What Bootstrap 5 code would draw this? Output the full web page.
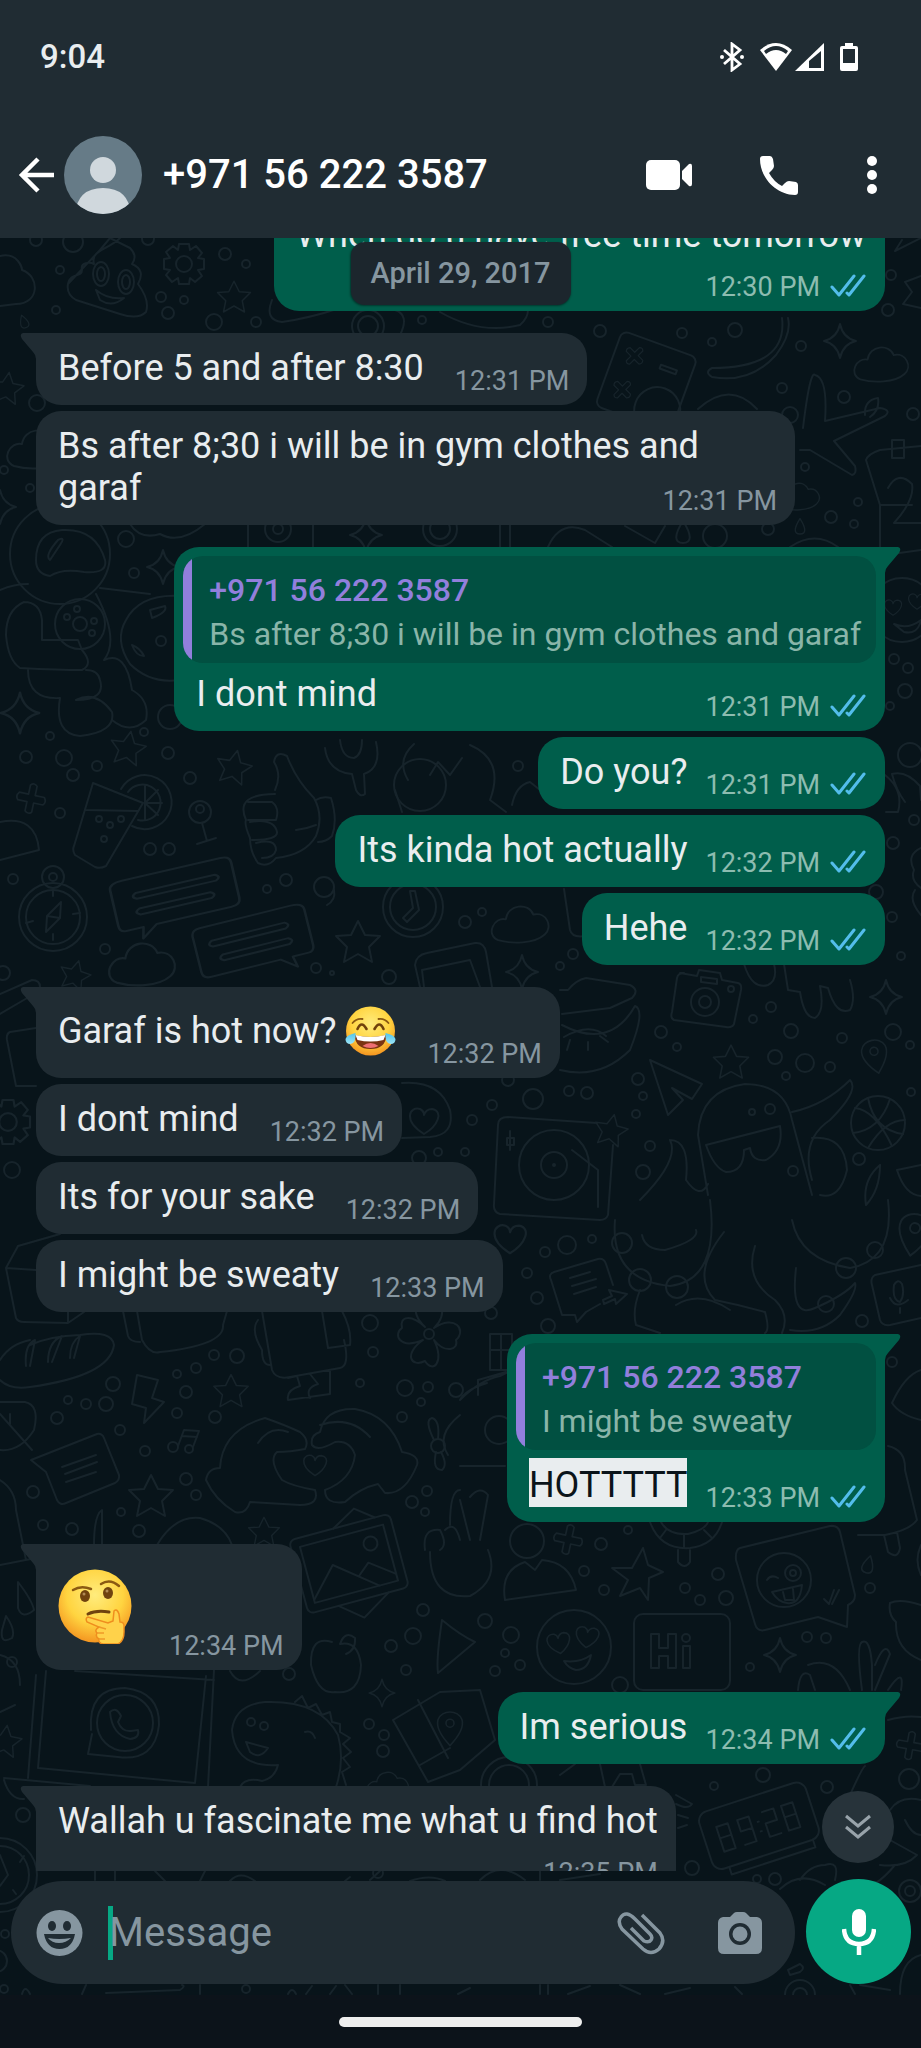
<!DOCTYPE html>
<html lang="en" data-bs-theme="dark">
<head>
<meta charset="utf-8">
<meta name="viewport" content="width=device-width, initial-scale=1">
<title>Chat</title>
<link href="https://cdn.jsdelivr.net/npm/bootstrap@5.3.0/dist/css/bootstrap.min.css" rel="stylesheet">
<style>
  body { font-family: Roboto, "Liberation Sans", sans-serif; background: #0c131a; color: #e9edef; }
  .top-area { background: #202c33; height: 238px; }
  .status-row { height: 113px; padding: 0 63px 0 40px; font-size: 33px; line-height: 38px; }
  .signal-icon { margin: 0 16px; }
  .app-row { height: 124px; padding: 0 43px 0 17px; }
  .app-actions { gap: 67px; }
  .contact-title { font-size: 40px; line-height: 48px; margin: 0 0 0 20px; }
  .icon-btn { background: none; border: 0; padding: 0; color: inherit; display: block; line-height: 0; }
  .chat-area { background: #08141a; min-height: 0; }
  .doodles { fill: none; stroke: #17242b; stroke-width: 2; stroke-linecap: round; stroke-linejoin: round; }
  .message-list { min-height: 0; padding: 0 36px; }
  .message-stack { margin-top: -38px; }
  .date-pill { top: 4px; left: 50%; transform: translateX(-50%); padding: 14px 20px; font-size: 29px; line-height: 35px; border-radius: 14px; background: #1c262d; color: #8696a0; box-shadow: 0 1px 2px rgba(0,0,0,.4); }
  .bubble { position: relative; flex: none; width: fit-content; max-width: calc(100% - 90px); padding: 14px 18px 8px 22px; border-radius: 25px; font-size: 36px; line-height: 42px; background: #202c33; margin-bottom: 6px; }
  .bubble::after { content: ""; display: block; clear: both; }
  .bubble.last { margin-bottom: 22px; }
  .bubble.sent { align-self: flex-end; background: #005e4b; padding-right: 19px; }
  .bubble.tailed::before { content: ""; position: absolute; top: 0; width: 17px; height: 26px; background: inherit; }
  .bubble.tailed:not(.sent) { border-top-left-radius: 0; }
  .bubble.tailed:not(.sent)::before { left: -16px; clip-path: path("M17 0H3Q-1 1 2 6L13 19Q16 22 16 26H17Z"); }
  .bubble.tailed.sent { border-top-right-radius: 0; }
  .bubble.tailed.sent::before { right: -16px; clip-path: path("M0 0H14Q18 1 15 6L4 19Q1 22 1 26H0Z"); }
  .stamp { float: right; display: flex; align-items: center; gap: 10px; margin: 19px 0 0 31px; font-size: 27px; line-height: 31px; color: #8696a0; }
  .stamp svg { margin-bottom: 3px; }
  .sent .stamp { margin-left: 18px; color: #8dbcb0; }
  .stamp.below { float: none; justify-content: flex-end; margin-top: 16px; }
  .has-emoji { line-height: 60px; }
  .has-emoji .stamp { margin-top: 38px; }
  .has-emoji svg { vertical-align: -13px; }
  .big-emoji .stamp { margin-top: 73px; margin-left: 37px; }
  .big-emoji svg { vertical-align: top; margin-top: 11px; }
  .bubble.with-quote { padding: 9px 9px 8px; }
  .quote { background: #015041; border-radius: 20px; overflow: hidden; padding: 12px 15px 7px 26px; font-size: 32px; line-height: 44px; color: #8ab5a9; position: relative; }
  .quote::before { content: ""; position: absolute; left: 0; top: 0; bottom: 0; width: 9px; background: #917fdc; }
  .quote-name { color: #917fdc; }
  .reply { padding: 10px 10px 0 13px; }
  .reply::after { content: ""; display: block; clear: both; }
  .reply.picked { padding-top: 8px; }
  .picked .stamp { margin-top: 25px; }
  .found { display: inline-block; background: #e9edef; color: #0b141a; padding-top: 6px; line-height: 43px; font-weight: 400; }
  .to-bottom { right: 27px; bottom: 132px; width: 72px; height: 72px; border-radius: 50%; background: #27333a; color: #98a3aa; display: flex; align-items: center; justify-content: center; border: 0; padding: 0; }
  .composer { padding: 8px 10px 11px 11px; gap: 11px; }
  .entry { background: #202c33; border-radius: 52px; height: 103px; min-width: 0; padding: 0 32px 0 25px; margin-top: 2px; color: #8696a0; }
  .entry-actions { gap: 52px; }
  .entry input { background: none; border: 0; outline: 0; padding: 0; color: #e9edef; font-size: 40px; line-height: 48px; width: 0; min-width: 0; }
  .entry input::placeholder { color: #8696a0; opacity: 1; }
  .caret { width: 5px; height: 54px; background: #06a884; margin-left: 25px; margin-right: -4px; }
  .mic-btn { width: 105px; height: 105px; border-radius: 50%; background: #06a884; color: #fff; border: 0; padding: 0; flex: none; display: flex; align-items: center; justify-content: center; }
  .gesture { height: 53px; background: #0c131a; }
  .gesture-bar { width: 243px; height: 10px; border-radius: 5px; background: #eee; }
</style>
</head>
<body class="vh-100 d-flex flex-column overflow-hidden">

<svg width="0" height="0" class="position-absolute" aria-hidden="true">
  <defs>
    <symbol id="ticks" viewBox="0 0 36 24"><path d="M2 13l7 8L24 2M17 19l2 2L34 2" fill="none" stroke="#53bdeb" stroke-width="3" stroke-linecap="round" stroke-linejoin="round"/></symbol>
    <radialGradient id="face" cx=".5" cy=".35" r=".7"><stop offset="0" stop-color="#ffec7d"/><stop offset=".55" stop-color="#ffd440"/><stop offset="1" stop-color="#f28a1b"/></radialGradient>
    <linearGradient id="drop" x1="0" y1="0" x2="0" y2="1"><stop offset="0" stop-color="#4fc4ea"/><stop offset="1" stop-color="#9ce5f7"/></linearGradient>
    <g id="star"><path d="M0-21L7-7L22-6L11 5L14 20L0 12L-14 20L-11 5L-22-6L-7-7Z"/></g>
    <g id="spark"><path d="M0-17Q3-3 16 0Q3 3 0 17Q-3 3-16 0Q-3-3 0-17Z"/></g>
    <g id="cloud"><path d="M-24 16C-38 10-28-9-16-6C-14-22 8-24 13-11C27-14 34 2 25 10C14 20-10 20-24 16Z"/></g>
    <g id="heart"><path d="M0 12C-22-2-14-16-4-13Q0-11 0-7Q2-13 8-13C20-11 14 4 0 12Z"/></g>
    <g id="plus"><path d="M-4-16Q0-20 4-16V-5H15Q19 0 15 4H4V15Q0 19-4 15V4H-15Q-19 0-15-5H-4Z"/></g>
    <g id="droplet"><path d="M0-12C9 2 9 10 0 10S-9 2 0-12Z"/></g>
    <g id="talk"><path d="M-40-25H35Q42-25 42-18V18Q42 25 35 25H-22L-34 36L-32 25H-45Q-50 25-50 18V-18Q-50-25-40-25ZM-32-10H28Q33-7 28-4H-32Q-37-7-32-10ZM-32 6H22Q27 9 22 12H-32Q-37 9-32 6Z"/></g>
    <g id="flower"><circle r="5"/><path d="M-4-7C-22-24-10-38 0-28C12-38 20-20 5-6C26-20 38-4 27 6C30 16 16 20 5 6C16 28 4 40-4 27C-18 34-26 20-6 6C-30 16-36 0-27-6C-30-18-18-20-4-7Z"/></g>
    <g id="gear"><circle r="8"/><path d="M-6-14L-5-20H5L6-14L12-18L18-11L14-6L20-5V5L14 6L18 12L11 18L6 14L5 20H-5L-6 14L-12 18L-18 11L-14 6L-20 5V-5L-14-6L-18-12L-11-18Z"/></g>
    <g id="pin"><path d="M0 22C-28-8-12-20 0-20S28-8 0 22Z"/><circle cy="-6" r="5"/></g>
  </defs>
</svg>

<header class="top-area flex-shrink-0">
  <div class="status-row d-flex align-items-center justify-content-between">
    <span class="fw-medium">9:04</span>
    <div class="d-flex align-items-center" aria-hidden="true">
      <svg width="24" height="30" viewBox="0 0 24 30"><path d="M4 8l16 14-8 6V2l8 6L4 22" fill="none" stroke="#fff" stroke-width="2.8"/><circle cx="2" cy="15" r="2" fill="#fff"/><circle cx="22" cy="15" r="2" fill="#fff"/></svg>
      <svg class="signal-icon" width="64" height="30" viewBox="0 0 64 30"><path d="M0 8Q16-6 32 8L16 29Z" fill="#fff"/><path d="M4 9Q16-1 28 9L26 12Q16 4 6 12Z" fill="#202c33"/><path d="M64 1V29H35Z" fill="#fff"/><path d="M61 9V26H49V19Z" fill="#202c33"/></svg>
      <svg width="18" height="30" viewBox="0 0 18 30"><path d="M5 1h8v3h3q2 0 2 2v21q0 2-2 2H2q-2 0-2-2V6q0-2 2-2h3z" fill="#fff"/><path d="M3 7h12v14H3z" fill="#202c33"/></svg>
    </div>
  </div>
  <div class="app-row d-flex align-items-center">
    <button class="icon-btn" aria-label="Back"><svg width="38" height="36" viewBox="0 0 38 36"><path d="M37 18H5M21 2L5 18l16 16" fill="none" stroke="#fff" stroke-width="4.5"/></svg></button>
    <svg class="ms-2" width="80" height="80" viewBox="0 0 80 80" role="img" aria-label="Contact photo"><clipPath id="round"><circle cx="40" cy="40" r="39"/></clipPath><g clip-path="url(#round)"><path fill="#667b87" d="M0 0h80v80H0z"/><circle cx="40" cy="35" r="13" fill="#d0d8dd"/><path d="M12 80Q14 53 40 53T68 80Z" fill="#d0d8dd"/></g></svg>
    <h1 class="contact-title fw-medium flex-grow-1">+971 56 222 3587</h1>
    <div class="app-actions d-flex align-items-center">
      <button class="icon-btn" aria-label="Video call"><svg width="46" height="30" viewBox="0 0 46 30"><rect width="34" height="30" rx="5" fill="#fff"/><path d="M36 11l7-7q3-1 3 2v18q0 3-3 2l-7-7z" fill="#fff"/></svg></button>
      <button class="icon-btn" aria-label="Voice call"><svg width="40" height="40" viewBox="0 0 40 40"><path d="M4 1h7q2 0 3 3l1 7q0 2-2 4l-3 3q5 9 13 13l3-3q2-2 4-2l7 1q2 1 2 3v7q0 3-3 3C16 39 1 22 1 4Q1 1 4 1Z" fill="#fff"/></svg></button>
      <button class="icon-btn" aria-label="More options"><svg width="12" height="38" viewBox="0 0 12 38"><g fill="#fff"><circle cx="6" cy="5" r="5"/><circle cx="6" cy="19" r="5"/><circle cx="6" cy="33" r="5"/></g></svg></button>
    </div>
  </div>
</header>

<main class="chat-area flex-grow-1 d-flex flex-column position-relative">
  <svg class="doodles position-absolute top-0 start-0 w-100 h-100" viewBox="0 238 921 1757" preserveAspectRatio="xMidYMin slice" aria-hidden="true">
    <!-- first band -->
    <path d="M0 256C18 252 22 268 22 270C40 276 40 304 16 304L0 306M68 284C70 272 82 278 82 270C80 262 90 262 94 264C90 250 108 250 120 238M100 250L110 238L130 248Q138 256 132 264Q146 270 138 284Q150 300 146 312Q138 320 120 314L76 300Q66 294 68 284ZM96 290Q108 300 124 298Q112 308 100 300Z"/>
    <ellipse cx="101" cy="274" rx="8" ry="12"/><ellipse cx="101" cy="274" rx="4" ry="7"/><ellipse cx="126" cy="282" rx="8" ry="12"/><ellipse cx="126" cy="282" rx="4" ry="7"/>
    <use href="#gear" x="184" y="264"/><use href="#star" transform="translate(234 297) scale(.75)"/><circle cx="36" cy="240" r="6"/><circle cx="73" cy="242" r="10"/><circle cx="60" cy="270" r="4"/><circle cx="56" cy="310" r="4"/><circle cx="148" cy="239" r="6"/><circle cx="225" cy="254" r="6"/><circle cx="246" cy="264" r="4"/><circle cx="161" cy="297" r="5"/><circle cx="168" cy="313" r="6"/><circle cx="184" cy="300" r="4"/><circle cx="214" cy="322" r="8"/><circle cx="256" cy="322" r="5"/><use href="#droplet" transform="translate(24 322) rotate(-20) scale(.6)"/><circle cx="368" cy="326" r="16"/><circle cx="368" cy="326" r="10"/><path d="M272 300Q264 320 282 322Q310 318 340 308M440 312Q480 335 520 325Q528 318 528 310M395 310Q410 315 400 335"/>
    <circle cx="422" cy="320" r="4"/><circle cx="548" cy="322" r="5"/><circle cx="600" cy="331" r="6"/><circle cx="735" cy="330" r="7"/><circle cx="682" cy="333" r="5"/><circle cx="712" cy="342" r="4"/><circle cx="891" cy="275" r="5"/><circle cx="888" cy="310" r="6"/><path d="M921 238L895 251L902 240M921 276L905 282L912 292L903 304L921 308"/><path d="M782 318Q788 368 712 368Q704 372 712 377Q750 384 776 355Q792 334 788 318"/>
    <use href="#spark" x="840" y="341"/><use href="#cloud" transform="translate(882 365) scale(.9)"/><circle cx="801" cy="346" r="5"/><circle cx="782" cy="388" r="5"/><circle cx="844" cy="397" r="6"/><circle cx="913" cy="414" r="6"/>
    <g transform="translate(648 377) rotate(20)"><rect x="-40" y="-35" width="80" height="80" rx="7"/><use href="#plus" transform="translate(-20 -15) rotate(25) scale(.6)"/><use href="#plus" transform="translate(-20 21) rotate(25) scale(.6)"/><path d="M8-16H25V-12H8Z"/><circle cx="20" cy="28" r="23"/></g>
    <path d="M803 428Q810 370 815 375Q828 378 825 421L880 408Q892 410 885 416L834 441L855 466Q857 474 852 475L810 450L800 450M865 415Q864 400 878 398Q880 410 870 417M698 409Q730 380 757 409M866 460Q868 454 880 450L921 446M866 460L880 505V550M880 505H912M892 440H904V458H892ZM888 488Q898 470 912 484Q915 500 894 523H921"/><circle cx="790" cy="415" r="8"/><circle cx="805" cy="467" r="4"/><circle cx="858" cy="502" r="4"/><circle cx="831" cy="517" r="6"/><circle cx="854" cy="524" r="4"/><use href="#cloud" transform="translate(799 497) scale(.7)"/>
    <use href="#star" transform="translate(7 388) rotate(8) scale(.75)"/><circle cx="37" cy="403" r="8"/><use href="#cloud" transform="translate(38 450) scale(1)"/><circle cx="4" cy="470" r="4"/><circle cx="30" cy="488" r="4"/><use href="#spark" x="0" y="507"/>
    <!-- astronaut and planet -->
    <circle cx="60" cy="554" r="50"/><path d="M36 560Q36 532 62 530Q96 528 105 560Q108 574 84 572Q62 568 50 576Q36 574 36 560ZM50 560Q44 556 58 540Q66 536 60 545ZM24 602Q6 610 6 635Q8 660 20 668Q60 670 82 670Q94 664 82 650L78 640H42V620Q40 602 24 602M28 670Q28 700 60 698Q54 734 80 736Q116 732 112 712Q96 690 76 700Q106 700 100 680Q98 670 86 670M0 590Q14 584 28 584M96 594Q120 640 104 660Q126 650 132 690Q150 700 146 720Q130 735 112 720M100 588L150 594"/><circle cx="80" cy="624" r="25"/><circle cx="80" cy="624" r="7"/><circle cx="67" cy="617" r="3"/><circle cx="77" cy="609" r="3"/><circle cx="94" cy="621" r="3"/><circle cx="92" cy="633" r="3"/>
    <path d="M179 596Q140 594 126 620Q114 640 130 664Q150 684 179 680M150 610L165 606Q168 612 152 618ZM132 645Q140 648 144 656Q136 656 132 645Z"/><circle cx="161" cy="641" r="5"/><use href="#spark" x="163" y="567"/><circle cx="126" cy="539" r="8"/><circle cx="134" cy="573" r="5"/><use href="#spark" transform="translate(20 713) scale(1.2)"/><circle cx="170" cy="717" r="12"/><circle cx="144" cy="732" r="4"/><circle cx="50" cy="736" r="4"/><path d="M130 524Q140 540 160 534Q180 545 205 524M248 524V547M313 524V547"/><circle cx="278" cy="529" r="13"/><circle cx="278" cy="529" r="5"/><use href="#spark" transform="translate(366 535)"/><circle cx="440" cy="529" r="17"/><circle cx="440" cy="529" r="10"/><path d="M500 524V547M510 524V547M548 547Q560 520 585 530L612 547M625 526L655 543L665 526"/><use href="#droplet" x="683" y="533"/><circle cx="715" cy="536" r="12"/><circle cx="768" cy="529" r="6"/><use href="#droplet" transform="translate(800 527) scale(.7)"/><path d="M790 547Q815 530 838 547M885 555L921 550"/>
    <circle cx="902" cy="610" r="32"/><use href="#heart" transform="translate(893 608) scale(.6)"/><use href="#heart" transform="translate(917 602) scale(.6)"/><path d="M894 624Q908 630 921 620Q918 635 904 632Z"/><circle cx="894" cy="659" r="5"/><circle cx="908" cy="668" r="5"/><circle cx="905" cy="691" r="7"/><circle cx="890" cy="706" r="4"/>
    <!-- cocktail, thumb and compass band -->
    <use href="#plus" transform="translate(31 799) rotate(12) scale(.85)"/><use href="#star" transform="translate(128 748) rotate(10) scale(.8)"/><use href="#star" transform="translate(234 767) rotate(12) scale(.8)"/><circle cx="26" cy="757" r="6"/><circle cx="64" cy="758" r="8"/><circle cx="97" cy="766" r="5"/><circle cx="73" cy="775" r="6"/><circle cx="168" cy="753" r="6"/><circle cx="190" cy="778" r="6"/><circle cx="60" cy="813" r="5"/>
    <path d="M93 783L143 803L106 866Q100 869 95 867L75 855Q72 850 74 846ZM86 810L138 811M0 822Q36 815 39 850L0 860"/><circle cx="99" cy="819" r="3"/><circle cx="110" cy="825" r="3"/><circle cx="104" cy="839" r="3"/><circle cx="121" cy="819" r="3"/><path d="M121 789A27 27 0 1 1 132 826M128 792A18 18 0 1 1 138 820M145 803L145 786M145 803L158 790M145 803L162 803M145 803L158 815M145 803L145 820"/><circle cx="200" cy="812" r="11"/><circle cx="200" cy="809" r="4"/><path d="M202 823L207 841M197 844L216 838"/><circle cx="150" cy="849" r="6"/><circle cx="169" cy="849" r="6"/>
    <path d="M275 790Q282 775 274 762Q276 750 287 756Q296 780 314 798Q324 816 316 836Q305 855 276 858Q268 868 258 863Q250 852 250 838Q244 824 246 820Q240 806 248 800Q256 794 275 794M248 802H272Q280 808 276 820H248M250 822Q274 818 277 832Q278 840 252 840M256 843Q276 838 276 850Q274 858 262 858M316 800Q322 796 331 798Q338 820 332 836Q326 842 318 842M296 830Q306 829 316 825M325 748Q328 772 352 774L356 790Q360 798 365 794L364 774Q382 768 376 742M340 740Q342 758 354 758Q362 755 362 740"/>
    <circle cx="420" cy="785" r="26"/><path d="M408 780Q396 760 414 744M430 775L438 762L450 775L462 758M395 790L402 812M470 745Q505 760 490 800L506 812M512 805Q516 785 530 782L540 790"/><circle cx="518" cy="766" r="5"/><circle cx="267" cy="889" r="4"/><circle cx="286" cy="880" r="6"/><circle cx="13" cy="879" r="5"/>
    <circle cx="53" cy="877" r="11"/><circle cx="53" cy="877" r="4"/><circle cx="53" cy="917" r="34"/><circle cx="53" cy="917" r="27"/><path d="M61 902L47 916L46 932L60 918ZM47 916L60 918M53 890V896M53 940V934M26 923L33 921M80 913L73 914"/><use href="#talk" transform="translate(180 893) rotate(-13) scale(1.35 1)"/><use href="#talk" transform="translate(248 942) rotate(-14) scale(-1.25 1)"/><use href="#cloud" transform="translate(143 965) scale(1.1)"/><circle cx="105" cy="949" r="5"/><use href="#star" transform="translate(358 942)"/><circle cx="413" cy="907" r="30"/><circle cx="413" cy="907" r="23"/><path d="M410 891L415 891L419 910L407 922L403 918L413 908Z"/><circle cx="324" cy="887" r="10"/><path d="M334 890Q336 900 327 905"/><circle cx="316" cy="968" r="5"/><circle cx="332" cy="973" r="2"/><circle cx="389" cy="977" r="7"/><use href="#star" transform="translate(75 975) rotate(15) scale(.7)"/><circle cx="3" cy="973" r="7"/><path d="M0 994L32 980Q40 980 40 987M420 987L415 965Q416 955 427 953L475 943Q484 942 486 952L492 987M424 987L422 970L470 960L480 987M564 889L570 930Q572 938 585 936"/>
    <use href="#cloud" transform="translate(521 925) scale(.95)"/><circle cx="465" cy="922" r="6"/><circle cx="482" cy="912" r="4"/><use href="#spark" x="522" y="972"/><circle cx="573" cy="954" r="5"/><circle cx="560" cy="966" r="4"/>
    <circle cx="910" cy="755" r="12"/><path d="M892 774Q906 770 920 786L921 800M892 774Q896 790 905 802M885 775Q904 790 898 812H886M921 848Q906 855 914 870Q910 880 921 888M915 890Q908 900 921 915M744 964Q752 990 768 985Q778 980 774 964M784 964L788 990L800 992Q804 1018 815 1018Q825 1012 820 986L828 988Q836 1016 850 1010Q856 1000 850 980"/><circle cx="893" cy="843" r="6"/><circle cx="914" cy="820" r="5"/><circle cx="892" cy="917" r="5"/><circle cx="876" cy="892" r="7"/><circle cx="901" cy="956" r="4"/><use href="#spark" x="886" y="997"/>
    <!-- lips, camera, llama, turntable -->
    <path d="M560 990H568Q576 980 586 978L630 985Q640 990 632 998L610 1008L562 1014M562 1025Q610 1050 635 1006Q646 1010 630 1050Q600 1080 560 1070M564 1037Q590 1022 606 1036M570 1040L567 1050M588 1042V1050M600 1036L608 1042"/><path d="M680 973L697 976L699 970L720 973L722 980L738 983Q742 984 741 990L734 1024Q732 1028 726 1027L674 1020Q670 1018 672 1012L677 978Q678 973 684 973ZM701 977L717 979V984L701 982Z"/><circle cx="705" cy="1002" r="14"/><circle cx="705" cy="1002" r="6"/><circle cx="731" cy="989" r="3"/><circle cx="771" cy="1007" r="5"/><circle cx="753" cy="1019" r="4"/><circle cx="791" cy="1031" r="7"/><circle cx="842" cy="1038" r="5"/><circle cx="893" cy="1032" r="8"/><circle cx="661" cy="1032" r="6"/><circle cx="677" cy="1047" r="4"/><circle cx="910" cy="1045" r="4"/><use href="#star" transform="translate(731 1062) scale(.8)"/><use href="#pin" transform="translate(875 1056) rotate(-12) scale(.8)"/><circle cx="775" cy="1057" r="7"/><circle cx="805" cy="1063" r="9"/><circle cx="786" cy="1076" r="4"/><circle cx="830" cy="1067" r="5"/><path d="M650 1060L702 1084L692 1099L672 1088L683 1100L668 1115Z"/><circle cx="638" cy="1079" r="6"/><circle cx="643" cy="1096" r="4"/><circle cx="636" cy="1114" r="4"/><circle cx="569" cy="1091" r="5"/><circle cx="587" cy="1093" r="6"/><circle cx="533" cy="1099" r="10"/><circle cx="508" cy="1080" r="6"/><circle cx="492" cy="1105" r="5"/><circle cx="472" cy="1120" r="5"/><circle cx="465" cy="1152" r="4"/>
    <path d="M494 1204L498 1125Q498 1117 508 1117L597 1123M613 1145L608 1215Q606 1220 600 1220L500 1214Q493 1212 494 1204M510 1131V1150M507 1138H514V1145H507ZM572 1150L598 1170V1207"/><circle cx="554" cy="1165" r="35"/><circle cx="554" cy="1165" r="13"/><circle cx="554" cy="1165" r="1"/><use href="#star" transform="translate(611 1130) rotate(12) scale(.75)"/><circle cx="650" cy="1146" r="5"/><circle cx="643" cy="1172" r="7"/>
    <path d="M708 1195L698 1135Q700 1090 745 1084Q785 1084 792 1120L812 1195M706 1145L780 1126Q784 1150 766 1160Q752 1162 750 1148L744 1150Q744 1172 726 1172Q714 1168 706 1145ZM792 1112Q825 1105 850 1080Q860 1090 830 1120Q800 1140 812 1180M812 1138Q845 1135 847 1170Q840 1200 820 1195M670 1140Q690 1140 686 1180Q700 1200 708 1184M670 1140Q680 1160 640 1200"/><circle cx="878" cy="1123" r="27"/><path d="M853 1133Q880 1130 890 1099M855 1108Q875 1110 892 1146M868 1098Q874 1130 903 1134M905 1120Q885 1120 868 1148"/><circle cx="770" cy="1109" r="5"/><circle cx="752" cy="1112" r="3"/><circle cx="859" cy="1159" r="6"/><circle cx="911" cy="1092" r="4"/><circle cx="793" cy="1171" r="5"/><path d="M880 1165Q862 1180 866 1205Q880 1190 880 1165M897 1170L921 1165M897 1170Q905 1195 921 1196"/>
    <!-- snake and parcel band -->
    <path d="M615 1220Q610 1280 670 1286Q720 1280 710 1200M642 1235Q645 1250 665 1250Q700 1240 696 1230M724 1232Q690 1275 715 1300Q740 1305 765 1312Q770 1330 765 1333M755 1246Q744 1280 775 1300Q790 1315 782 1333M640 1290Q632 1310 636 1325L660 1333M676 1305Q700 1290 730 1310M792 1220Q800 1260 850 1268Q895 1260 888 1200M796 1268Q790 1320 815 1308Q845 1295 855 1283Q858 1290 840 1315Q820 1335 790 1330"/><circle cx="677" cy="1287" r="11"/><circle cx="622" cy="1243" r="10"/><circle cx="640" cy="1280" r="11"/><circle cx="846" cy="1268" r="10"/><circle cx="875" cy="1250" r="8"/><circle cx="826" cy="1304" r="8"/><use href="#pin" transform="translate(914 1234) rotate(10)"/><use href="#heart" transform="translate(510 1240) scale(1.1)"/><circle cx="567" cy="1245" r="9"/><circle cx="545" cy="1252" r="5"/><circle cx="592" cy="1239" r="4"/><circle cx="527" cy="1273" r="5"/><circle cx="537" cy="1298" r="6"/><path d="M554 1272L598 1259Q604 1258 606 1264L613 1285M554 1272Q548 1274 551 1280L562 1315H575L577 1322L586 1312L600 1304M570 1278L590 1272M572 1286L596 1279M574 1294L596 1287M603 1300L612 1296L609 1290L627 1294L616 1304L615 1299L604 1304ZM875 1275L921 1265M875 1275Q870 1278 872 1285L880 1320Q882 1326 890 1325L921 1318M894 1285Q892 1300 900 1302Q905 1295 902 1284Q898 1278 894 1285M890 1298Q896 1310 908 1300M900 1308V1313"/><circle cx="548" cy="1326" r="7"/><circle cx="862" cy="1321" r="6"/><circle cx="491" cy="1313" r="6"/>
    <use href="#gear" transform="translate(8 1122) scale(1.1)"/><circle cx="12" cy="1170" r="8"/><path d="M36 1028L10 1032Q6 1034 7 1040L16 1086H36M0 1014L34 994M402 1083Q440 1080 450 1110Q455 1135 430 1137L402 1138"/><use href="#heart" transform="translate(424 1122) scale(1)"/><circle cx="419" cy="1158" r="7"/><circle cx="438" cy="1152" r="4"/>
    <path d="M18 1246L60 1234M18 1246L6 1268L36 1270M6 1268L16 1318Q18 1322 24 1322L68 1323L84 1312M68 1323V1310M123 1311L128 1336Q130 1342 140 1342M137 1311L142 1340Q150 1355 160 1352Q225 1345 223 1325L227 1311M258 1320Q250 1330 262 1350Q262 1365 270 1365M262 1311L272 1370Q276 1380 290 1377L340 1368Q350 1366 344 1340M322 1311L328 1348L350 1345Q352 1330 342 1311M288 1378L297 1376L300 1386Q286 1390 288 1400L330 1394L330 1370M310 1374L318 1384Q305 1388 310 1398"/>
    <path d="M0 1360Q10 1344 30 1340M0 1380Q10 1390 30 1387Q110 1376 114 1345Q112 1330 80 1335Q50 1336 30 1345M26 1366Q24 1345 35 1340L30 1366M48 1362Q48 1342 62 1336L52 1362M70 1358Q70 1342 80 1336L74 1358"/><use href="#flower" x="429" y="1334"/><circle cx="370" cy="1323" r="8"/><circle cx="373" cy="1352" r="5"/><circle cx="360" cy="1383" r="4"/><circle cx="405" cy="1388" r="8"/><circle cx="428" cy="1387" r="5"/><circle cx="421" cy="1402" r="4"/><circle cx="456" cy="1390" r="7"/><circle cx="402" cy="1417" r="5"/><path d="M137 1375L158 1380L152 1398L164 1402L144 1423L146 1408L132 1404Z"/><use href="#star" transform="translate(231 1391) scale(.78)"/><circle cx="214" cy="1355" r="5"/><circle cx="237" cy="1356" r="7"/><circle cx="196" cy="1368" r="5"/><circle cx="177" cy="1374" r="4"/><circle cx="113" cy="1384" r="7"/><circle cx="186" cy="1392" r="6"/><circle cx="106" cy="1404" r="7"/><circle cx="86" cy="1404" r="5"/><circle cx="68" cy="1400" r="4"/><circle cx="57" cy="1418" r="6"/><circle cx="177" cy="1413" r="5"/><circle cx="215" cy="1417" r="6"/><circle cx="120" cy="1430" r="5"/><circle cx="145" cy="1451" r="5"/>
    <path d="M0 1402H25Q40 1405 34 1430Q20 1452 0 1450M0 1414L32 1450M10 1424V1414M178 1446L184 1430L199 1431L193 1447M182 1436L197 1437"/><circle cx="173" cy="1447" r="5"/><circle cx="189" cy="1449" r="4"/><path d="M31 1460L97 1434Q102 1433 104 1438L119 1475Q120 1480 115 1483L66 1503Q60 1506 57 1500L46 1472ZM62 1467L96 1455M66 1482L96 1472M65 1474L97 1462"/><use href="#star" transform="translate(151 1496)"/><circle cx="186" cy="1479" r="6"/><circle cx="196" cy="1495" r="5"/><circle cx="33" cy="1492" r="6"/><circle cx="72" cy="1529" r="6"/><circle cx="43" cy="1525" r="5"/><circle cx="139" cy="1531" r="6"/><circle cx="121" cy="1512" r="4"/>
    <path d="M220 1468Q222 1430 265 1418Q285 1425 300 1432Q310 1440 305 1449Q290 1452 277 1452Q268 1460 282 1480Q292 1486 315 1490Q320 1505 300 1505L250 1502Q246 1515 235 1512Q215 1500 206 1480Q208 1468 220 1468M258 1443Q270 1425 288 1432M320 1432Q325 1408 355 1409Q390 1415 402 1452Q420 1455 417 1465Q405 1495 385 1493L378 1484Q360 1488 345 1502Q325 1505 325 1490Q352 1480 355 1455Q350 1440 335 1442Q318 1452 312 1445Q310 1435 320 1432M320 1425Q350 1415 370 1437"/><use href="#heart" transform="translate(315 1466) scale(.8)"/><circle cx="438" cy="1446" r="7"/><path d="M434 1440Q424 1420 432 1418Q440 1420 438 1439M436 1452Q432 1470 442 1470Q448 1465 441 1452M460 1415Q435 1435 448 1455M460 1490Q450 1490 450 1525"/><circle cx="427" cy="1491" r="5"/><circle cx="412" cy="1502" r="6"/><circle cx="425" cy="1512" r="4"/>
    <use href="#star" transform="translate(264 1532) scale(.7)"/><path d="M157 1545Q175 1515 200 1518Q225 1525 232 1545M94 1545Q94 1515 102 1510V1545M0 1480Q16 1490 16 1510L26 1560M0 1565L36 1558"/><g transform="translate(348 1564) rotate(-15)"><rect x="-51" y="-38" width="104" height="76" rx="6"/><rect x="-42" y="-29" width="86" height="58"/><circle cx="27" cy="-14" r="7"/><path d="M-42 26L-15-3L25 29M8 14L20 4L44 22M-5-38L20-52L38-38M-20 38L2 56L32 38"/></g><path d="M425 1550Q422 1528 440 1530Q448 1545 440 1550M445 1530Q455 1520 460 1540M430 1552Q430 1600 470 1596Q500 1580 488 1550M460 1500L470 1540M488 1495L480 1540M470 1497Q480 1485 488 1495"/>
    <path d="M487 1383Q465 1390 460 1400Q480 1380 500 1376L508 1372M490 1334H512V1370H490ZM501 1334V1370M490 1350H512M460 1466H505M478 1395V1380L506 1372"/><circle cx="499" cy="1430" r="14"/><circle cx="892" cy="1362" r="5"/><path d="M921 1370Q905 1375 892 1403Q900 1415 921 1420M888 1446Q906 1450 905 1470L917 1520Q910 1530 885 1535L858 1535M884 1535L888 1552Q898 1560 900 1548L897 1532"/>
    <!-- smileys and greeting card -->
    <circle cx="527" cy="1541" r="17"/><path d="M505 1600Q500 1570 525 1562L535 1570L542 1560Q570 1562 576 1590Z"/><use href="#plus" transform="translate(568 1540) rotate(12) scale(.85)"/><circle cx="601" cy="1544" r="6"/><circle cx="628" cy="1530" r="4"/><path d="M650 1522Q660 1550 690 1548Q715 1545 722 1522M661 1522Q668 1535 688 1534Q705 1530 708 1522M684 1534V1548M666 1530L660 1538M704 1530L712 1538M678 1550V1562Q685 1570 690 1562V1550"/><path d="M643 1548L648 1565L663 1572L649 1578L648 1600L640 1588L620 1596L628 1580L612 1568L632 1568Z"/><circle cx="584" cy="1571" r="5"/><circle cx="604" cy="1590" r="5"/><circle cx="685" cy="1588" r="5"/><circle cx="718" cy="1574" r="6"/><circle cx="700" cy="1600" r="5"/><circle cx="726" cy="1598" r="7"/><path d="M740 1548L830 1526Q838 1525 840 1532L855 1595Q855 1602 848 1605L847 1627L818 1617L765 1630Q757 1632 755 1624L736 1560Q735 1550 740 1548Z"/><circle cx="784" cy="1580" r="27"/><circle cx="793" cy="1573" r="8"/><circle cx="793" cy="1573" r="3"/><path d="M767 1580Q771 1574 778 1578M772 1592L802 1585Q800 1605 787 1603Q778 1602 772 1592M783 1592L785 1600H794L793 1589M824 1599L829 1604L834 1590M832 1604L839 1590"/><use href="#droplet" transform="translate(868 1565) rotate(15) scale(.8)"/><circle cx="870" cy="1588" r="5"/><path d="M921 1605Q900 1598 890 1603Q888 1615 896 1622Q895 1650 921 1660M921 1545Q914 1560 921 1575"/><circle cx="574" cy="1647" r="37"/><use href="#heart" transform="translate(559 1644) rotate(-10) scale(.8)"/><use href="#heart" transform="translate(587 1638) rotate(6) scale(.8)"/><path d="M564 1661Q580 1663 591 1655Q588 1670 576 1670Q568 1668 564 1661Z"/><rect x="634" y="1614" width="96" height="76" rx="9"/><path d="M651 1634H659V1648H668V1634H676V1668H668V1656H659V1668H651ZM683 1646H690V1668H683Z"/><circle cx="686" cy="1638" r="4"/><circle cx="485" cy="1621" r="7"/><circle cx="511" cy="1635" r="8"/><circle cx="505" cy="1653" r="4"/><circle cx="520" cy="1665" r="5"/><circle cx="495" cy="1671" r="5"/><circle cx="620" cy="1685" r="8"/><use href="#spark" x="780" y="1655"/><circle cx="807" cy="1637" r="5"/><circle cx="826" cy="1638" r="5"/><circle cx="750" cy="1667" r="4"/><path d="M798 1690Q800 1668 810 1675L815 1690M808 1665Q835 1655 850 1690M862 1690Q856 1645 862 1642Q870 1638 872 1665V1690M875 1665Q885 1640 890 1654L875 1690M888 1690Q905 1665 901 1690"/>
    <path d="M18 1582Q32 1600 34 1610Q22 1620 18 1608ZM6 1616Q16 1630 12 1638Q0 1645 2 1630ZM0 1655Q20 1660 20 1685"/><circle cx="12" cy="1662" r="5"/><path d="M332 1642Q310 1635 311 1665Q318 1695 335 1692Q360 1695 361 1665Q358 1640 340 1644Q345 1630 355 1638Q356 1650 346 1654"/><circle cx="423" cy="1610" r="6"/><circle cx="413" cy="1636" r="8"/><circle cx="391" cy="1646" r="6"/><circle cx="406" cy="1670" r="5"/><circle cx="289" cy="1674" r="6"/><use href="#spark" transform="translate(382 1693) scale(.8)"/><path d="M442 1620Q436 1660 438 1673L475 1642Q460 1635 442 1620M230 1671Q240 1690 260 1671"/>
    <path d="M36 1675L28 1778M46 1671L38 1768L195 1783L206 1676M214 1670L208 1787M75 1671L214 1680M0 1712L15 1705M4 1780Q10 1800 24 1799M4 1778L90 1786"/><circle cx="125" cy="1723" r="28"/><path d="M91 1730Q88 1688 125 1688Q160 1692 159 1725Q155 1762 118 1757L88 1754L92 1734M110 1712Q116 1706 121 1716L118 1722Q122 1732 131 1731L138 1730Q140 1738 130 1739Q112 1735 110 1712Z"/><use href="#star" transform="translate(5 1741) rotate(8) scale(.75)"/><path d="M240 1787Q245 1777 262 1781Q275 1778 278 1765Q235 1768 232 1730Q235 1705 265 1702Q320 1700 338 1735Q345 1760 336 1787M246 1742L268 1748Q260 1760 250 1752ZM295 1702L302 1696L308 1708L316 1704L322 1715L330 1712L332 1722L340 1724L340 1732L350 1738L343 1744L351 1752L343 1758L350 1767L342 1772L346 1785M305 1732Q312 1730 315 1738"/><circle cx="251" cy="1722" r="4"/><circle cx="264" cy="1726" r="4"/><circle cx="369" cy="1724" r="5"/><circle cx="384" cy="1735" r="5"/><circle cx="383" cy="1751" r="6"/><path d="M393 1720L440 1692L480 1690L495 1740L460 1770L428 1782L393 1720M420 1765L450 1748M418 1700L448 1758"/><use href="#pin" transform="translate(450 1728) scale(.8)"/><use href="#cloud" transform="translate(388 1786) scale(.7)"/>
    <circle cx="509" cy="1785" r="28"/><circle cx="509" cy="1785" r="20"/><path d="M600 1764L605 1787M612 1787L620 1774H632L635 1785H646L640 1764M560 1775L575 1764"/><circle cx="763" cy="1775" r="7"/><circle cx="714" cy="1786" r="4"/><circle cx="827" cy="1787" r="6"/><g transform="translate(758 1826) rotate(-18)"><rect x="-55" y="-30" width="112" height="60" rx="10"/><path d="M-40-12h12v12h-12zM-40 0h12v14h-12zM-18-12h12v12h-12zM-6 0v14h-12M8-12h12v12H8v14h12M28-12h12v12H28zM28 0h12v14H28zM1-4h1M1 6h1M-40 30v8h88v-8"/></g><path d="M850 1795Q862 1768 865 1766M888 1720Q905 1715 921 1717M880 1865Q905 1868 917 1855L890 1840M895 1865Q870 1895 850 1888M890 1810Q900 1795 921 1800M905 1820Q912 1835 921 1835M780 1889Q800 1870 825 1885M800 1880Q810 1865 825 1865Q840 1860 835 1880"/><use href="#plus" transform="translate(910 1746) rotate(10) scale(.8)"/><circle cx="909" cy="1779" r="10"/><circle cx="692" cy="1868" r="7"/><circle cx="775" cy="1879" r="6"/><circle cx="757" cy="1879" r="4"/><circle cx="910" cy="1891" r="11"/><circle cx="910" cy="1891" r="5"/><path d="M676 1795L692 1804Q688 1810 676 1804M678 1815L688 1818M678 1828L687 1825"/>
    <circle cx="23" cy="1815" r="7"/><circle cx="0" cy="1875" r="37"/><circle cx="0" cy="1875" r="29"/><path d="M0 1855L8 1875L0 1886M24 1856L20 1862M16 1894L13 1890"/><circle cx="5" cy="1934" r="4"/><circle cx="-4" cy="1961" r="11"/><path d="M95 1871V1880M115 1871V1880M155 1871L165 1881M205 1871L200 1881M230 1881Q240 1870 255 1881M345 1881L350 1877M370 1880L380 1871M410 1881Q430 1874 445 1881M480 1880Q500 1860 525 1880M540 1871V1880M560 1880L600 1874"/><circle cx="378" cy="1873" r="5"/>
    <circle cx="4" cy="1989" r="4"/><path d="M22 1994Q25 1984 30 1994M82 1994L86 1985M106 1993L180 1990Q186 1986 182 1985M200 1985V1994M288 1994Q292 1986 296 1994M306 1994L312 1986M330 1994L336 1986M345 1985L352 1994M378 1985V1994M400 1985V1994M458 1994L470 1988M540 1985V1994M548 1985V1994M568 1994L590 1986M620 1985L640 1994M665 1994L690 1988M735 1987L742 1994"/><circle cx="246" cy="1989" r="4"/><circle cx="800" cy="1995" r="15"/><circle cx="800" cy="1995" r="7"/><path d="M788 1970L800 1964Q806 1968 800 1972L790 1975ZM850 1985L855 1994M860 1985L890 1990M900 1994Q900 1960 921 1955"/>
  </svg>

  <section class="message-list flex-grow-1 overflow-hidden position-relative" aria-label="Messages">
    <div class="message-stack d-flex flex-column">
      <div class="bubble sent last">When do u have free time tomorrow<time class="stamp below">12:30 PM <svg width="36" height="24"><use href="#ticks"/></svg></time></div>

      <div class="bubble tailed">Before 5 and after 8:30<time class="stamp">12:31 PM</time></div>
      <div class="bubble last">Bs after 8;30 i will be in gym clothes and garaf<time class="stamp">12:31 PM</time></div>

      <div class="bubble sent tailed with-quote">
        <div class="quote"><div class="quote-name fw-medium">+971 56 222 3587</div><div class="text-nowrap">Bs after 8;30 i will be in gym clothes and garaf</div></div>
        <div class="reply">I dont mind<time class="stamp">12:31 PM <svg width="36" height="24"><use href="#ticks"/></svg></time></div>
      </div>
      <div class="bubble sent">Do you?<time class="stamp">12:31 PM <svg width="36" height="24"><use href="#ticks"/></svg></time></div>
      <div class="bubble sent">Its kinda hot actually<time class="stamp">12:32 PM <svg width="36" height="24"><use href="#ticks"/></svg></time></div>
      <div class="bubble sent last">Hehe<time class="stamp">12:32 PM <svg width="36" height="24"><use href="#ticks"/></svg></time></div>

      <div class="bubble tailed has-emoji">Garaf is hot now? <svg width="51" height="50" viewBox="0 0 50 50" role="img" aria-label="Face with tears of joy"><circle cx="25" cy="25" r="24.5" fill="url(#face)"/><path d="M7 17Q11 12 17 13M43 17Q39 12 33 13" fill="none" stroke="#8b5a12" stroke-width="1.8" stroke-linecap="round"/><path d="M12 23Q16 14 21 23M29 23Q34 14 38 23" fill="none" stroke="#70420b" stroke-width="2.6" stroke-linecap="round"/><path d="M9 29Q25 33 41 29Q40 43 25 43T9 29Z" fill="#7a3412"/><path d="M10 29Q25 33 40 29L38 34Q25 37 12 34Z" fill="#fff"/><path d="M17 40Q25 34 33 40Q25 44 17 40Z" fill="#ee6f73"/><path d="M10 27Q11 37 5 38Q0 38 0 33Q1 29 10 27ZM40 27Q39 37 45 38Q50 38 50 33Q49 29 40 27Z" fill="url(#drop)"/></svg><time class="stamp">12:32 PM</time></div>
      <div class="bubble">I dont mind<time class="stamp">12:32 PM</time></div>
      <div class="bubble">Its for your sake<time class="stamp">12:32 PM</time></div>
      <div class="bubble last">I might be sweaty<time class="stamp">12:33 PM</time></div>

      <div class="bubble sent tailed last with-quote">
        <div class="quote"><div class="quote-name fw-medium">+971 56 222 3587</div><div>I might be sweaty</div></div>
        <div class="reply picked"><span class="found">HOTTTTT</span><time class="stamp">12:33 PM <svg width="36" height="24"><use href="#ticks"/></svg></time></div>
      </div>

      <div class="bubble tailed last big-emoji"><svg width="74" height="75" viewBox="0 0 74 75" role="img" aria-label="Thinking face"><circle cx="37" cy="37" r="36.5" fill="url(#face)"/><path d="M15 21Q23 16 33 20M43 15Q52 9 61 17" fill="none" stroke="#8b5a12" stroke-width="2.5" stroke-linecap="round"/><ellipse cx="27" cy="27" rx="5" ry="6" fill="#70430f"/><ellipse cx="50" cy="24" rx="5" ry="6" fill="#70430f"/><circle cx="26" cy="25" r="1.5" fill="#b08a55"/><circle cx="49" cy="22" r="1.5" fill="#b08a55"/><path d="M30 45Q38 41 51 43" fill="none" stroke="#70430f" stroke-width="3" stroke-linecap="round"/><path d="M30 48Q27 49 29 53L41 58Q36 61 39 64Q37 68 41 70Q40 74 45 75H60Q66 72 66 63V57Q66 53 62 53L61 45Q59 39 56 42L55 52L50 54Z" fill="#ffd24a" stroke="#ef8e1e" stroke-width="1.5"/><path d="M41 58L48 60M39 64H46M41 70H47" stroke="#ef9a28" stroke-width="1.5"/></svg><time class="stamp">12:34 PM</time></div>

      <div class="bubble sent tailed last">Im serious<time class="stamp">12:34 PM <svg width="36" height="24"><use href="#ticks"/></svg></time></div>

      <div class="bubble tailed">Wallah u fascinate me what u find hot<time class="stamp below">12:35 PM</time></div>
    </div>
    <div class="date-pill position-absolute fw-medium text-nowrap">April 29, 2017</div>
  </section>

  <button class="to-bottom position-absolute" aria-label="Scroll to bottom"><svg width="28" height="26" viewBox="0 0 28 26"><path d="M2 2l12 10L26 2M2 13l12 10 12-10" fill="none" stroke="currentColor" stroke-width="3"/></svg></button>

  <form class="composer d-flex position-relative flex-shrink-0">
    <div class="entry flex-grow-1 d-flex align-items-center">
      <button type="button" class="icon-btn" aria-label="Emoji"><svg width="47" height="46" viewBox="0 0 47 46"><circle cx="23.5" cy="23" r="23" fill="#8696a0"/><g fill="#202c33"><ellipse cx="16" cy="16" rx="4" ry="5"/><ellipse cx="31" cy="16" rx="4" ry="5"/><path d="M8 24H39Q36 39 23.5 39T8 24Z"/></g><path d="M12 28Q23 30 35 28Q30 33 23 33T12 28Z" fill="#8696a0"/></svg></button>
      <span class="caret" aria-hidden="true"></span>
      <input type="text" class="flex-grow-1" placeholder="Message" aria-label="Message">
      <div class="entry-actions d-flex align-items-center">
        <button type="button" class="icon-btn" aria-label="Attach"><svg width="48" height="44" viewBox="0 0 48 44"><path d="M14 17L27 30Q32 32 34 29Q36 26 33 23L18 8Q9 -1 4 6Q0 11 5 18L26 38Q34 45 42 38Q49 30 43 22L25 4" fill="none" stroke="#8696a0" stroke-width="3.5"/></svg></button>
        <button type="button" class="icon-btn" aria-label="Camera"><svg width="46" height="42" viewBox="0 0 46 42"><path d="M13 5L17 1Q18 0 20 0H26Q28 0 29 1L33 5H40Q45 6 45 11V36Q45 42 39 42H7Q1 42 1 36V11Q1 6 6 5Z" fill="#8696a0"/><circle cx="23" cy="22" r="11" fill="#202c33"/><circle cx="23" cy="22" r="7.5" fill="#8696a0"/></svg></button>
      </div>
    </div>
    <button type="button" class="mic-btn" aria-label="Record voice message"><svg width="34" height="46" viewBox="0 0 34 46"><rect x="10" y="0" width="14" height="28" rx="7" fill="#fff"/><path d="M2 20Q3 35 17 35T32 20M17 35V46" fill="none" stroke="#fff" stroke-width="4.5"/></svg></button>
  </form>
</main>

<footer class="gesture flex-shrink-0 d-flex align-items-center justify-content-center"><div class="gesture-bar"></div></footer>

<script src="https://cdn.jsdelivr.net/npm/bootstrap@5.3.0/dist/js/bootstrap.bundle.min.js"></script>
</body>
</html>
